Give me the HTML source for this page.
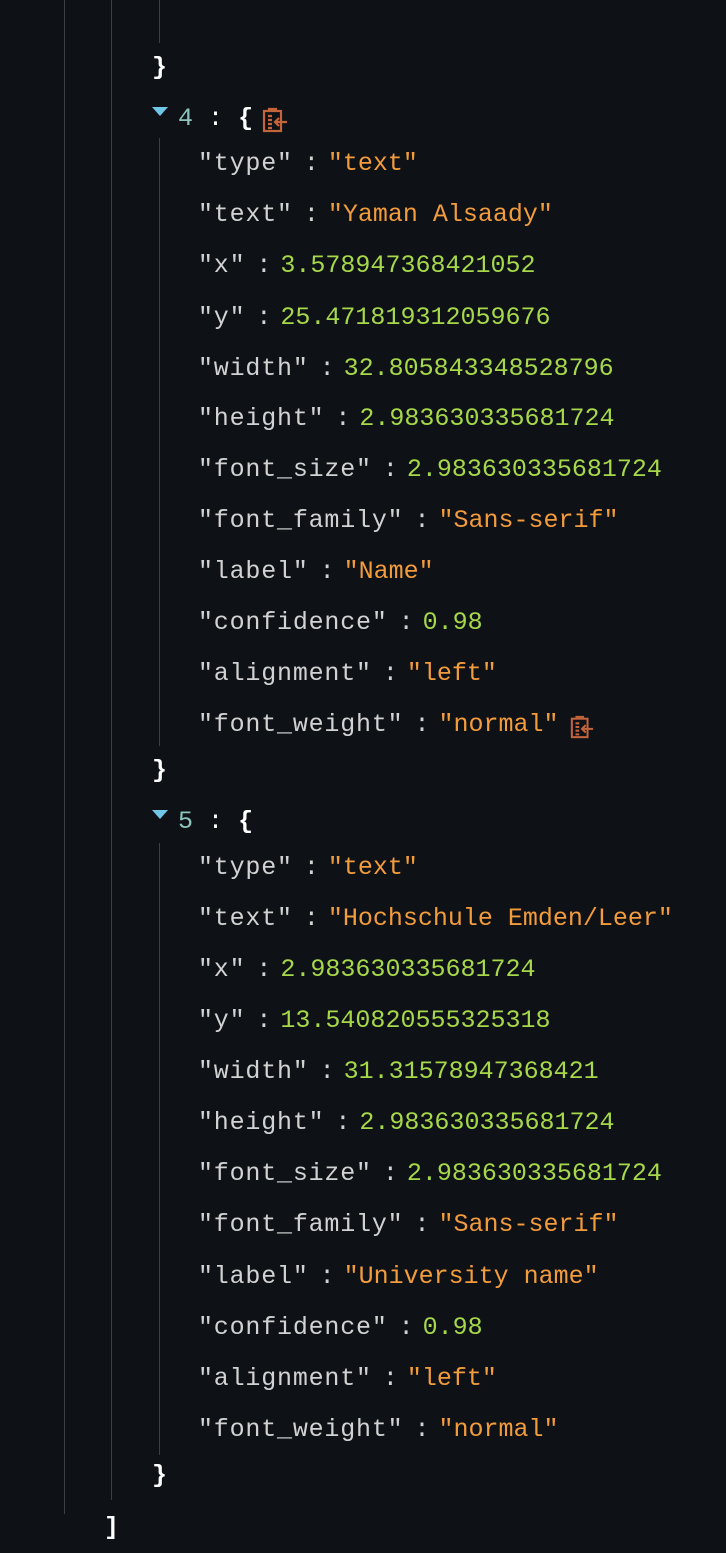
<!DOCTYPE html>
<html><head><meta charset="utf-8"><style>
html,body{margin:0;padding:0;background:#0e1116;}
body{width:726px;height:1514px;position:relative;overflow:hidden;font-family:"Liberation Mono",monospace;font-size:25px;}
.r{position:absolute;height:50px;line-height:50px;white-space:pre;color:#d4d4d4;}
.k{letter-spacing:0.8px;color:#d2d2d2;}
.c{display:inline-block;width:15px;margin:0 9px 0 11px;text-align:center;color:#d2d2d2;}
.s{color:#f39c3c;}
.n{color:#a6d84a;}
.b{color:#fff;font-weight:bold;}
.i{color:#8cc4bc;}
.v{position:absolute;width:1px;background:#3b3e44;}
.tri{position:absolute;width:0;height:0;border-left:8px solid transparent;border-right:8px solid transparent;border-top:9px solid #6fc6e6;}
</style></head><body>
<div class="v" style="left:64px;top:0;height:1514px"></div>
<div class="v" style="left:111px;top:0;height:1500px"></div>
<div class="v" style="left:159px;top:0;height:43px"></div>
<div class="v" style="left:159px;top:138px;height:608px"></div>
<div class="v" style="left:159px;top:843px;height:612px"></div>

<div class="r b" style="left:152px;top:43px">}</div>
<div class="tri" style="left:152px;top:107px"></div>
<div class="r" style="left:178px;top:94px"><span class="i">4</span> <span class="b" style="font-weight:normal">:</span> <span class="b">{</span></div>
<svg style="position:absolute;left:262px;top:107px" width="26" height="26" viewBox="0 0 26 26" fill="none" stroke="#c4643a" stroke-width="2.2"><rect x="2" y="4" width="17" height="20"/><path d="M7 4V2h7v2M6 9h4M6 13h4M6 17h4M6 21h4M25 15h-12M17 11l-4 4 4 4"/></svg>

<div class="r" style="left:198px;top:139px"><span class="k">"type"</span><span class="c">:</span><span class="s">"text"</span></div>
<div class="r" style="left:198px;top:190px"><span class="k">"text"</span><span class="c">:</span><span class="s">"Yaman Alsaady"</span></div>
<div class="r" style="left:198px;top:241px"><span class="k">"x"</span><span class="c">:</span><span class="n">3.578947368421052</span></div>
<div class="r" style="left:198px;top:293px"><span class="k">"y"</span><span class="c">:</span><span class="n">25.471819312059676</span></div>
<div class="r" style="left:198px;top:344px"><span class="k">"width"</span><span class="c">:</span><span class="n">32.805843348528796</span></div>
<div class="r" style="left:198px;top:394px"><span class="k">"height"</span><span class="c">:</span><span class="n">2.983630335681724</span></div>
<div class="r" style="left:198px;top:445px"><span class="k">"font_size"</span><span class="c">:</span><span class="n">2.983630335681724</span></div>
<div class="r" style="left:198px;top:496px"><span class="k">"font_family"</span><span class="c">:</span><span class="s">"Sans-serif"</span></div>
<div class="r" style="left:198px;top:547px"><span class="k">"label"</span><span class="c">:</span><span class="s">"Name"</span></div>
<div class="r" style="left:198px;top:598px"><span class="k">"confidence"</span><span class="c">:</span><span class="n">0.98</span></div>
<div class="r" style="left:198px;top:649px"><span class="k">"alignment"</span><span class="c">:</span><span class="s">"left"</span></div>
<div class="r" style="left:198px;top:700px"><span class="k">"font_weight"</span><span class="c">:</span><span class="s">"normal"</span></div>
<svg style="position:absolute;left:570px;top:715px" width="24" height="24" viewBox="0 0 26 26" fill="none" stroke="#c4643a" stroke-width="2.2"><rect x="2" y="4" width="17" height="20"/><path d="M7 4V2h7v2M6 9h4M6 13h4M6 17h4M6 21h4M25 15h-12M17 11l-4 4 4 4"/></svg>

<div class="r b" style="left:152px;top:746px">}</div>
<div class="tri" style="left:152px;top:810px"></div>
<div class="r" style="left:178px;top:797px"><span class="i">5</span> <span class="b" style="font-weight:normal">:</span> <span class="b">{</span></div>

<div class="r" style="left:198px;top:843px"><span class="k">"type"</span><span class="c">:</span><span class="s">"text"</span></div>
<div class="r" style="left:198px;top:894px"><span class="k">"text"</span><span class="c">:</span><span class="s">"Hochschule Emden/Leer"</span></div>
<div class="r" style="left:198px;top:945px"><span class="k">"x"</span><span class="c">:</span><span class="n">2.983630335681724</span></div>
<div class="r" style="left:198px;top:996px"><span class="k">"y"</span><span class="c">:</span><span class="n">13.540820555325318</span></div>
<div class="r" style="left:198px;top:1047px"><span class="k">"width"</span><span class="c">:</span><span class="n">31.31578947368421</span></div>
<div class="r" style="left:198px;top:1098px"><span class="k">"height"</span><span class="c">:</span><span class="n">2.983630335681724</span></div>
<div class="r" style="left:198px;top:1149px"><span class="k">"font_size"</span><span class="c">:</span><span class="n">2.983630335681724</span></div>
<div class="r" style="left:198px;top:1200px"><span class="k">"font_family"</span><span class="c">:</span><span class="s">"Sans-serif"</span></div>
<div class="r" style="left:198px;top:1252px"><span class="k">"label"</span><span class="c">:</span><span class="s">"University name"</span></div>
<div class="r" style="left:198px;top:1303px"><span class="k">"confidence"</span><span class="c">:</span><span class="n">0.98</span></div>
<div class="r" style="left:198px;top:1354px"><span class="k">"alignment"</span><span class="c">:</span><span class="s">"left"</span></div>
<div class="r" style="left:198px;top:1405px"><span class="k">"font_weight"</span><span class="c">:</span><span class="s">"normal"</span></div>
<div class="r b" style="left:152px;top:1451px">}</div>
<div class="r b" style="left:104px;top:1503px">]</div>
</body></html>
